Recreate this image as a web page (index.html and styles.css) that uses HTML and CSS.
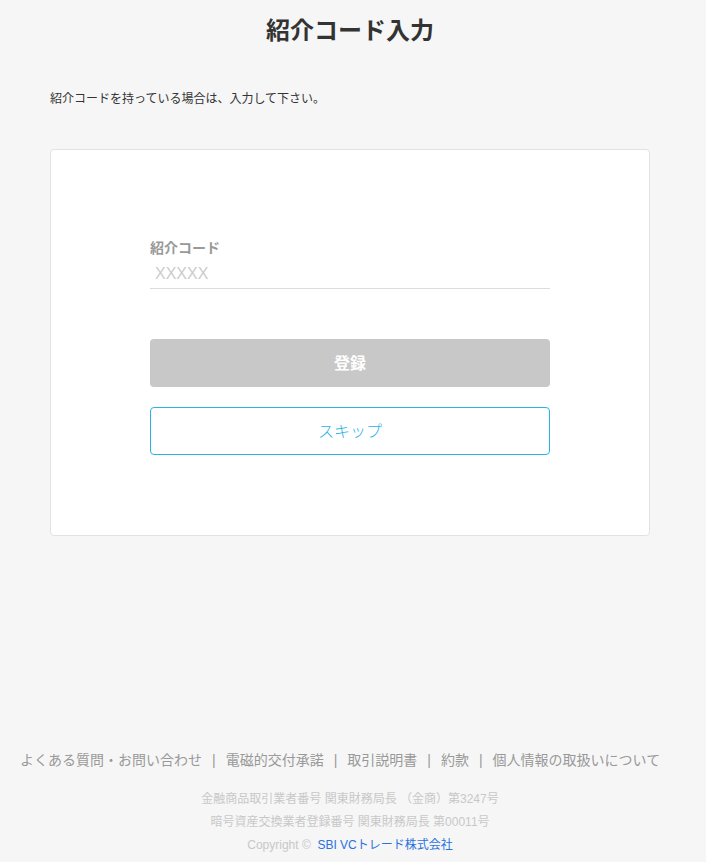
FILE: index.html
```html
<!DOCTYPE html>
<html lang="ja">
<head>
<meta charset="utf-8">
<title>紹介コード入力</title>
<link rel="stylesheet" href="styles.css">
</head>
<body>
<div class="page">
  <main class="main">
    <h1 class="title">紹介コード入力</h1>
    <p class="lead">紹介コードを持っている場合は、入力して下さい。</p>
    <section class="card">
      <form class="form">
        <label class="label" for="code">紹介コード</label>
        <input class="input" id="code" type="text" placeholder="XXXXX">
        <button class="btn btn-primary" type="button">登録</button>
        <button class="btn btn-outline" type="button">スキップ</button>
      </form>
    </section>
  </main>
  <footer class="footer">
    <nav class="links">
      <a class="link">よくある質問・お問い合わせ</a><span class="sep">|</span>
      <a class="link">電磁的交付承諾</a><span class="sep">|</span>
      <a class="link">取引説明書</a><span class="sep">|</span>
      <a class="link">約款</a><span class="sep">|</span>
      <a class="link">個人情報の取扱いについて</a>
    </nav>
    <p class="legal">金融商品取引業者番号 関東財務局長 （金商）第3247号</p>
    <p class="legal">暗号資産交換業者登録番号 関東財務局長 第00011号</p>
    <p class="legal">Copyright © &nbsp;<a class="company">SBI VCトレード株式会社</a></p>
  </footer>
</div>
</body>
</html>
```

FILE: styles.css
```css
* { box-sizing: border-box; }
html, body { margin: 0; padding: 0; }
body {
  background: #f6f6f6;
  font-family: "Liberation Sans", "Noto Sans CJK JP", sans-serif;
  color: #333;
}
.page {
  width: 700px;
  min-height: 862px;
  display: flex;
  flex-direction: column;
}
.main {
  display: flex;
  flex-direction: column;
  align-items: center;
  padding-top: 13px;
}
.title {
  margin: 0;
  font-size: 24px;
  line-height: 36px;
  font-weight: bold;
  color: #333;
}
.lead {
  align-self: flex-start;
  margin: 41px 0 0 50px;
  font-size: 12px;
  line-height: 18px;
  color: #333;
}
.card {
  margin-top: 41px;
  width: 600px;
  background: #fff;
  border: 1px solid #e2e2e2;
  border-radius: 4px;
  padding: 88px 0 80px;
  display: flex;
  justify-content: center;
}
.form {
  width: 400px;
  display: flex;
  flex-direction: column;
}
.label {
  font-size: 14px;
  line-height: 20px;
  font-weight: bold;
  color: #999;
}
.input {
  margin-top: 1px;
  height: 30px;
  border: none;
  border-bottom: 1px solid #ddd;
  padding: 0 0 0 5px;
  font-family: "Liberation Sans", "Noto Sans CJK JP", sans-serif;
  font-size: 16px;
  color: #333;
  background: transparent;
  outline: none;
}
.input::placeholder { color: #ccc; }
.btn {
  height: 48px;
  border-radius: 4px;
  padding: 0 0 3px;
  font-family: "Liberation Sans", "Noto Sans CJK JP", sans-serif;
  font-size: 16px;
  cursor: pointer;
}
.btn-primary {
  margin-top: 50px;
  background: #c8c8c8;
  border: none;
  color: #fff;
  font-weight: bold;
}
.btn-outline {
  margin-top: 20px;
  background: #fff;
  border: 1px solid #2ab3ea;
  color: #2ab3ea;
  font-weight: 300;
}
.footer {
  margin-top: auto;
  padding-bottom: 5px;
  display: flex;
  flex-direction: column;
  align-items: center;
}
.links {
  align-self: flex-start;
  margin-left: 20px;
  display: flex;
  font-size: 14px;
  line-height: 20px;
  color: #999;
}
.link { color: #999; }
.sep { margin: 0 10px; color: #999; }
.legal {
  margin: 0;
  font-size: 12px;
  line-height: 23px;
  color: #c8c8c8;
}
.links + .legal { margin-top: 18px; }
.company { color: #2a72e0; }
```
